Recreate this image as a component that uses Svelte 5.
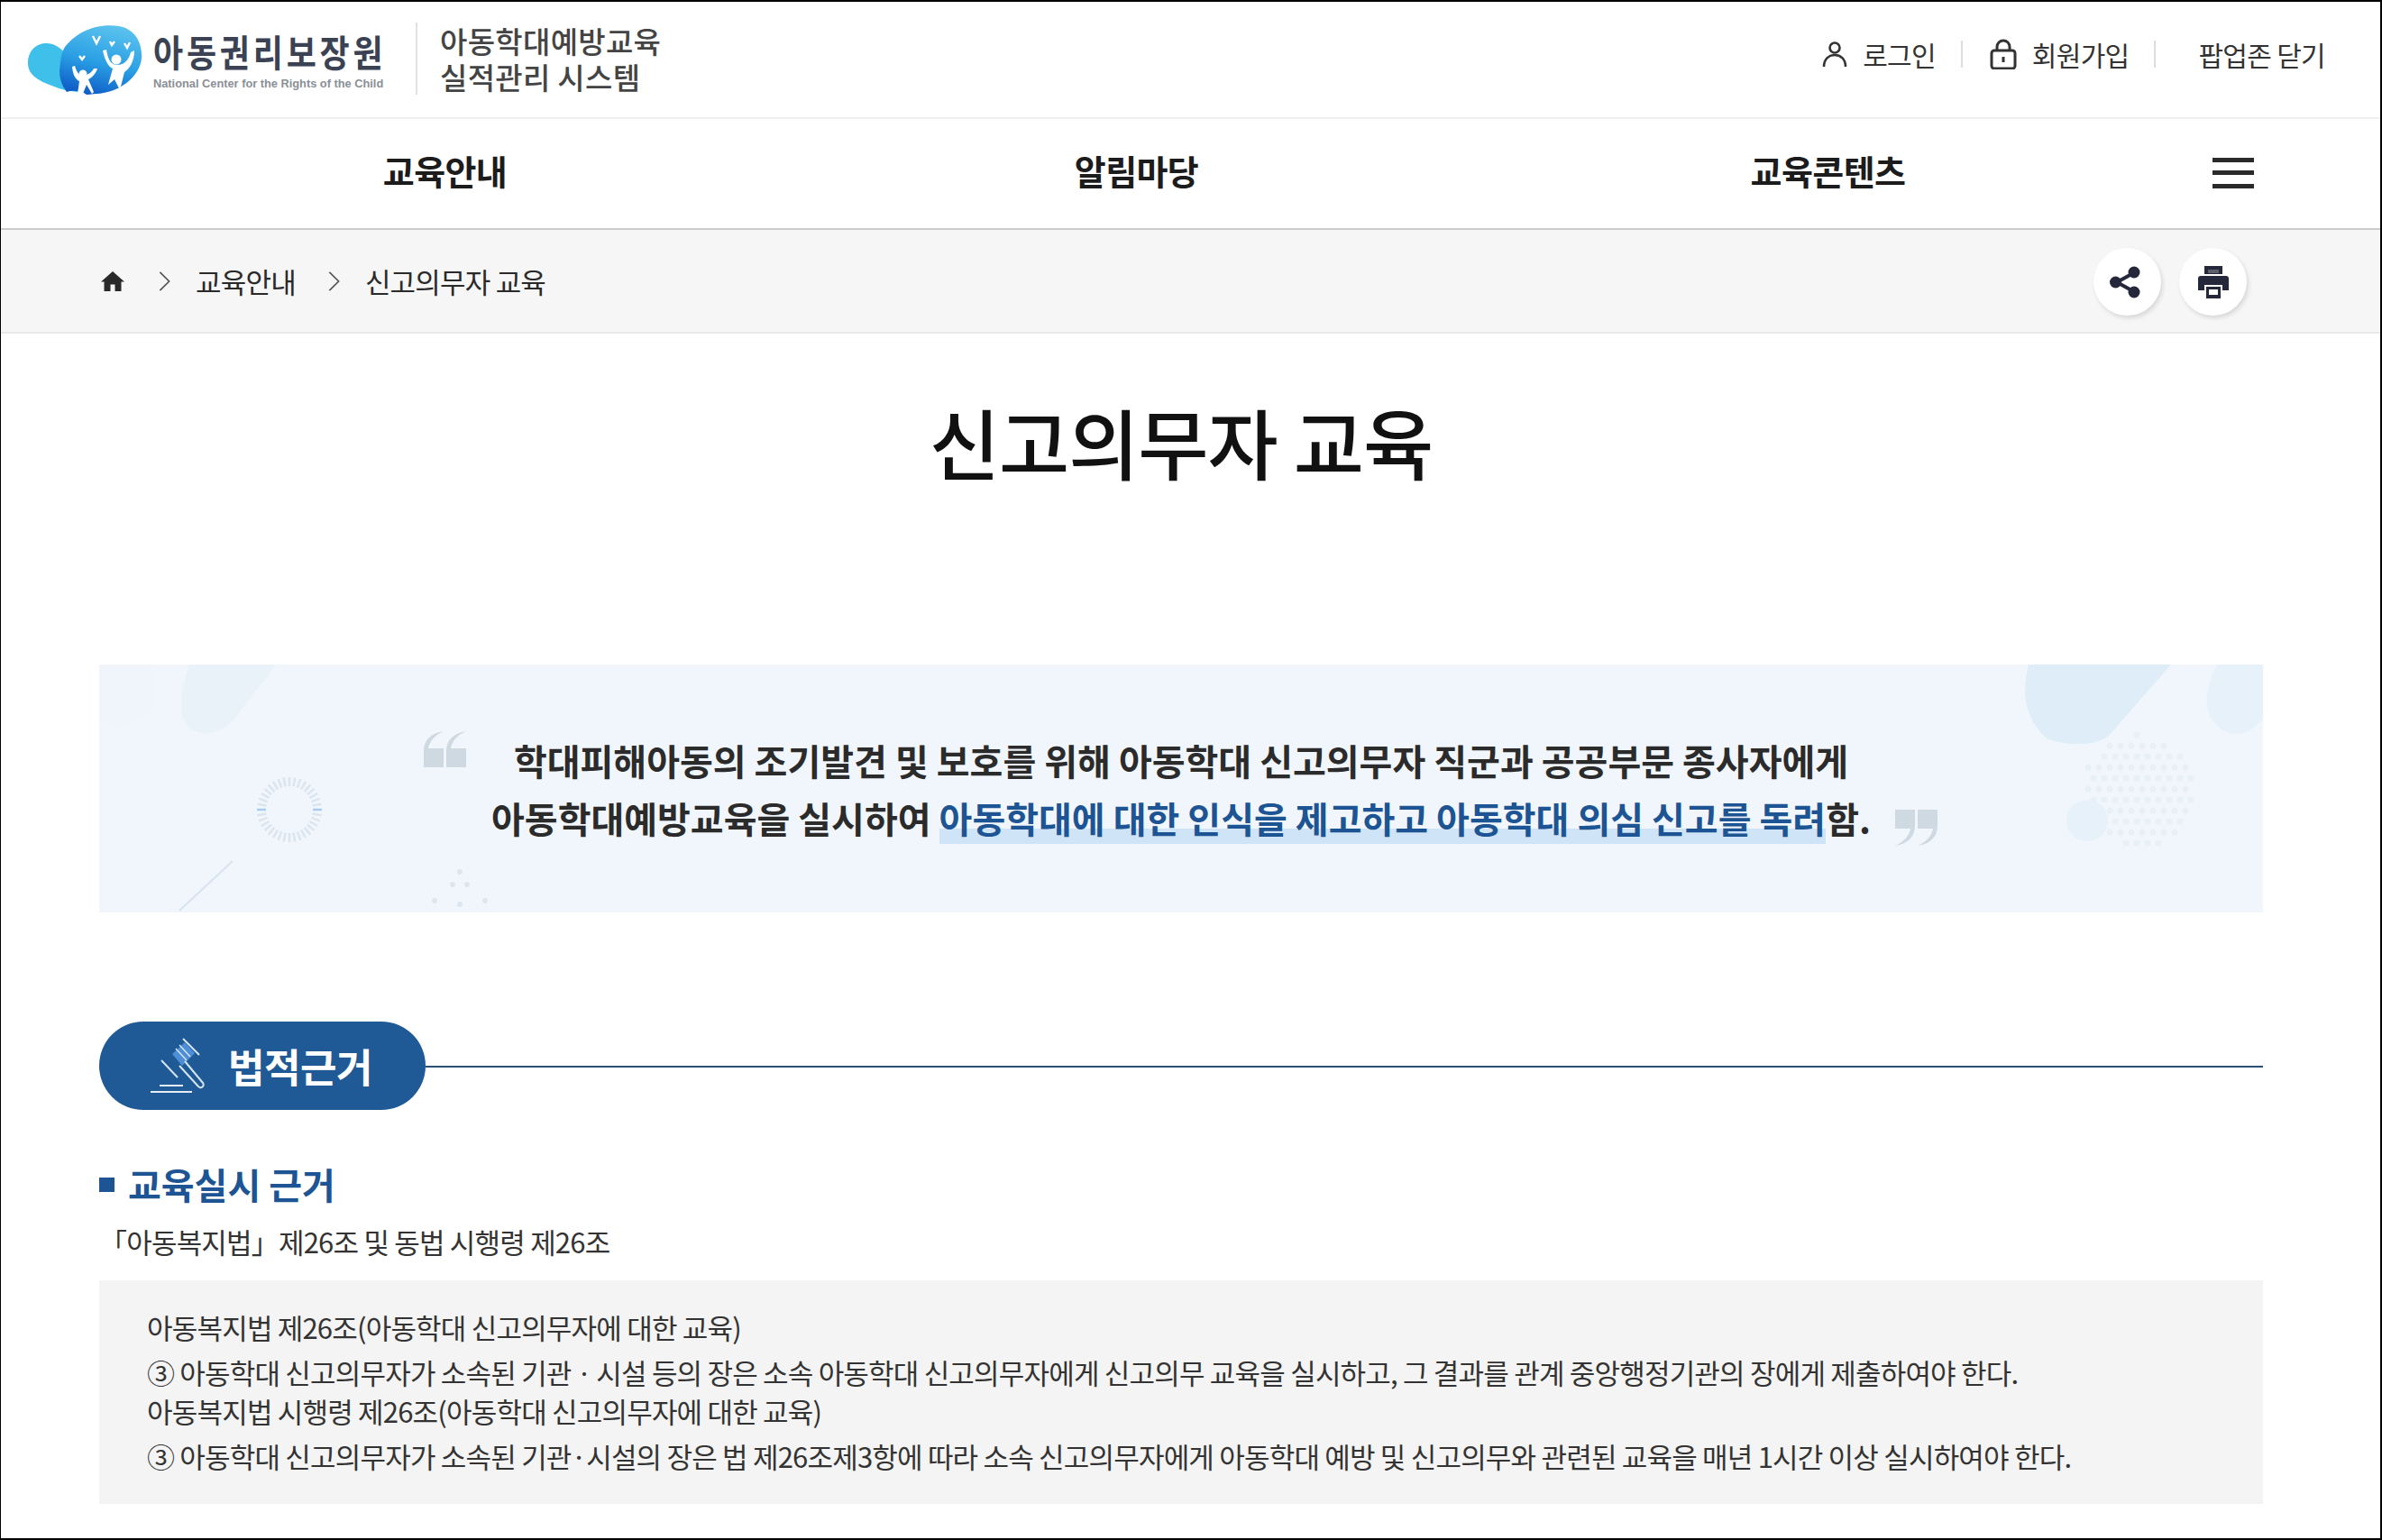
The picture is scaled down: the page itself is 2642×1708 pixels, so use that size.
<script>
  const rays = Array.from({ length: 36 }, (_, i) => i * 10);
  const dots = [];
  for (let r = 0; r < 11; r++) {
    for (let c = 0; c < 11; c++) {
      const x = 2200 + c * 12 + (r % 2) * 6;
      const y = 78 + r * 12;
      const dx = x - 2262, dy = y - 140;
      if (dx * dx + dy * dy < 3900) dots.push([x, y]);
    }
  }
</script>

<div class="frame">
  <header class="top">
    <div class="brand">
      <svg class="logo" viewBox="0 0 128 78" aria-hidden="true">
        <defs>
          <linearGradient id="lg" x1="0.7" y1="0" x2="0.4" y2="1">
            <stop offset="0" stop-color="#5cc3ee" />
            <stop offset="0.55" stop-color="#2a9fe4" />
            <stop offset="1" stop-color="#0f5fc8" />
          </linearGradient>
        </defs>
        <path d="M1 42C1 28 10 20 22 20C36 20 48 36 62 54C66 62 70 70 74 76C60 74 44 74 30 68C14 62 1 56 1 42Z" fill="#3fc0ea" />
        <path d="M42 24C58 4 82 -2 102 1C120 4 128 20 127 36C126 52 112 66 96 72C86 76 76 76 66 77C60 72 50 72 44 74C40 68 36 62 36 50C37 40 38 30 42 24Z" fill="url(#lg)" />
        <circle cx="99" cy="38" r="5.500" fill="#fff" />
        <path d="M84 28C86 38 90 46 95 48L90 66L97 60L103 72L108 52C114 48 119 40 119 28L115 30C113 38 108 44 100 44C94 44 90 40 88 27Z" fill="#fff" />
        <circle cx="62" cy="54" r="4.500" fill="#fff" />
        <path d="M50 46C51 56 54 60 58 62L56 76H62L66 66L72 76L74 74L68 60C72 58 76 54 78 48L74 48C72 52 68 55 62 56C58 56 55 52 53 45Z" fill="#fff" />
        <path d="M73 12l4 8 4-8M92 18l2 4 3-4M108 20l3 5 3-6M58 34l3 4 3-4" stroke="#fff" stroke-width="2.400" fill="none" />
      </svg>
      <div class="org">
        <div class="org-ko">아동권리보장원</div>
        <div class="org-en">National Center for the Rights of the Child</div>
      </div>
      <div class="sys">아동학대예방교육<br />실적관리 시스템</div>
    </div>
    <nav class="tools">
      <a class="tool">
        <svg class="ic-user" viewBox="0 0 28 30" aria-hidden="true"><circle cx="14" cy="8" r="5.500" fill="none" stroke="#333" stroke-width="2.600" /><path d="M2 29C2 20 8 16 14 16S26 20 26 29" fill="none" stroke="#333" stroke-width="2.600" /></svg>
        로그인
      </a>
      <i class="sep"></i>
      <a class="tool">
        <svg class="ic-lock" viewBox="0 0 30 34" aria-hidden="true"><path d="M8 14V9a7 7 0 0 1 14 0v5" fill="none" stroke="#333" stroke-width="3" /><rect x="2" y="13" width="26" height="20" rx="3" fill="none" stroke="#333" stroke-width="3" /><rect x="13.500" y="20" width="3" height="6" fill="#333" /></svg>
        회원가입
      </a>
      <i class="sep"></i>
      <a class="tool close">팝업존 닫기</a>
    </nav>
  </header>

  <nav class="gnb">
    <a>교육안내</a>
    <a>알림마당</a>
    <a>교육콘텐츠</a>
    <button class="burger" aria-label="menu"><span></span><span></span><span></span></button>
  </nav>

  <div class="crumbs">
    <svg class="ic-home" viewBox="0 0 26 22" aria-hidden="true"><path d="M13 0L26 11.500H22.500V22H15.500V14.500H10.500V22H3.500V11.500H0Z" fill="#2a2a2a" /></svg>
    <svg class="chev" viewBox="0 0 14 24" aria-hidden="true"><path d="M1.500 1L12.500 12L1.500 23" fill="none" stroke="#555" stroke-width="1.800" /></svg>
    <span>교육안내</span>
    <svg class="chev" viewBox="0 0 14 24" aria-hidden="true"><path d="M1.500 1L12.500 12L1.500 23" fill="none" stroke="#555" stroke-width="1.800" /></svg>
    <span>신고의무자 교육</span>
    <div class="round-btns">
      <button class="round share" aria-label="share">
        <svg viewBox="0 0 34 36" width="34" height="36" aria-hidden="true"><path d="M26 8L8 18L26 28" stroke="#24283a" stroke-width="4" fill="none" /><circle cx="27" cy="7" r="6.500" fill="#24283a" /><circle cx="6.500" cy="18" r="6.500" fill="#24283a" /><circle cx="27" cy="29" r="6.500" fill="#24283a" /></svg>
      </button>
      <button class="round" aria-label="print">
        <svg viewBox="0 0 34 36" width="34" height="36" aria-hidden="true"><path d="M7 0H27V9H7Z" fill="#24283a" /><path d="M3 11H31A3 3 0 0 1 34 14V27H27V21H7V27H0V14A3 3 0 0 1 3 11Z" fill="#24283a" /><path d="M9 23H25V36H9Z" fill="#24283a" /><rect x="12" y="26" width="10" height="6" fill="#fff" /><rect x="11" y="4" width="12" height="4" fill="#fff" opacity="0.25" /></svg>
      </button>
    </div>
  </div>

  <main class="main">
    <h1>신고의무자 교육</h1>

    <section class="banner">
      <svg class="deco" viewBox="0 0 2400 275" aria-hidden="true">
        <path d="M100 0H196L150 60C135 78 110 82 98 68C88 56 90 30 100 0Z" fill="#e9f1f9" />
        <path d="M0 0H60V50L20 70L0 60Z" fill="#eff5fb" />
        <path d="M148 218L89 273" stroke="#d6e3f0" stroke-width="2" />
        <g transform="translate(211 161)">
          {#each rays as a}
            <line x1="26" y1="0" x2="36" y2="0" stroke={a === 0 || a === 180 ? '#a9cdf0' : '#dbe5ef'} stroke-width="2.500" transform="rotate({a})" />
          {/each}
        </g>
        <g fill="#dde6f0">
          <circle cx="400" cy="230" r="3" /><circle cx="392" cy="244" r="3" /><circle cx="408" cy="244" r="3" /><circle cx="372" cy="262" r="3" /><circle cx="400" cy="266" r="3" /><circle cx="428" cy="262" r="3" />
        </g>
        <path d="M2140 0H2298L2230 78C2215 92 2180 90 2160 82C2135 60 2132 30 2140 0Z" fill="#deedf8" />
        <path d="M2350 0H2400V60C2380 85 2355 82 2340 55C2335 35 2340 15 2350 0Z" fill="#e6f1fa" />
        {#each dots as d}
          <circle cx={d[0]} cy={d[1]} r="3.500" fill="#e7eff7" />
        {/each}
        <circle cx="2205" cy="173" r="23" fill="#e6f1fa" />
      </svg>
      <svg class="q q-open" viewBox="0 0 47 40" aria-hidden="true"><path d="M22 0C12 4 6 12 5 19H22V40H0V22C0 10 8 2 22 0ZM47 0C37 4 31 12 30 19H47V40H25V22C25 10 33 2 47 0Z" fill="#cfd9e2" /></svg>
      <p class="lead">
        학대피해아동의 조기발견 및 보호를 위해 아동학대 신고의무자 직군과 공공부문 종사자에게<br />
        아동학대예방교육을 실시하여 <span class="hl">아동학대에 대한 인식을 제고하고 아동학대 의심 신고를 독려</span>함.
      </p>
      <svg class="q q-close" viewBox="0 0 47 40" aria-hidden="true"><path d="M25 40C35 36 41 28 42 21H25V0H47V18C47 30 39 38 25 40ZM0 40C10 36 16 28 17 21H0V0H22V18C22 30 14 38 0 40Z" fill="#cfd9e2" /></svg>
    </section>

    <div class="sec-row">
      <h2 class="pill">
        <svg class="gavel" viewBox="0 0 62 62" aria-hidden="true">
          <path d="M24 18L38 5L49 17L35 31Z" fill="#4d8fd6" />
          <path d="M38 26L58 50A3 3 0 0 1 53 54L32 31" fill="none" stroke="#d5e4f2" stroke-width="2" />
          <path d="M36 1L54 19M12 25L30 44" stroke="#d5e4f2" stroke-width="2" />
          <path d="M32 8L44 21M28 12L40 25" stroke="#d5e4f2" stroke-width="1.500" />
          <path d="M0 60H46M10 53H36" stroke="#e4edf6" stroke-width="2" />
        </svg>
        법적근거
      </h2>
      <div class="rule"></div>
    </div>

    <h3 class="sub">교육실시 근거</h3>
    <p class="law">「아동복지법」제26조 및 동법 시행령 제26조</p>

    <div class="box">
      <p class="l1">아동복지법 제26조(아동학대 신고의무자에 대한 교육)</p>
      <p class="l2">③ 아동학대 신고의무자가 소속된 기관ㆍ시설 등의 장은 소속 아동학대 신고의무자에게 신고의무 교육을 실시하고, 그 결과를 관계 중앙행정기관의 장에게 제출하여야 한다.</p>
      <p class="l3">아동복지법 시행령 제26조(아동학대 신고의무자에 대한 교육)</p>
      <p class="l4">③ 아동학대 신고의무자가 소속된 기관·시설의 장은 법 제26조제3항에 따라 소속 신고의무자에게 아동학대 예방 및 신고의무와 관련된 교육을 매년 1시간 이상 실시하여야 한다.</p>
    </div>
  </main>
</div>

<style>
  :global(body) {
    margin: 0;
    background: #fff;
  }
  .frame {
    width: 2642px;
    height: 1708px;
    box-sizing: border-box;
    border-style: solid;
    border-color: #000;
    border-width: 2px 2px 2px 1px;
    overflow: hidden;
    font-family: "Noto Sans CJK KR", "Noto Sans", sans-serif;
    color: #222;
  }
  .top {
    height: 128px;
    border-bottom: 2px solid #f0f0f0;
    display: flex;
    align-items: center;
    justify-content: space-between;
    padding: 0 61px 0 29px;
  }
  .brand {
    display: flex;
    align-items: center;
  }
  .logo {
    width: 128px;
    height: 78px;
    margin-top: 1px;
  }
  .org {
    margin-left: 12px;
    width: 259px;
  }
  .org-ko {
    font-size: 36px;
    font-weight: 700;
    line-height: 48px;
    letter-spacing: 3.800px;
    color: #3a4253;
    white-space: nowrap;
    transform: scaleY(1.15);
    transform-origin: center;
  }
  .org-en {
    font-family: "Liberation Sans", sans-serif;
    font-size: 12.800px;
    font-weight: 700;
    line-height: 14px;
    margin-top: 6px;
    color: #8a8f97;
    white-space: nowrap;
  }
  .sys {
    margin-left: 32px;
    margin-top: -3px;
    padding-left: 25px;
    border-left: 2px solid #e2e2e2;
    font-size: 33px;
    font-weight: 500;
    line-height: 40px;
    letter-spacing: 0.3px;
    color: #444;
  }
  .tools {
    display: flex;
    align-items: center;
    margin-bottom: 12px;
    font-size: 30px;
    letter-spacing: -0.7px;
    color: #333;
  }
  .tool {
    display: flex;
    align-items: center;
    gap: 17px;
  }
  .ic-user {
    width: 28px;
    height: 30px;
  }
  .ic-lock {
    width: 30px;
    height: 34px;
  }
  .sep {
    width: 2px;
    height: 30px;
    background: #ddd;
    margin: 0 30px 0 28px;
  }
  .close {
    margin-left: 17px;
  }
  .gnb {
    height: 121px;
    border-bottom: 2px solid #ccc;
    display: grid;
    grid-template-columns: repeat(3, 767px) 1fr;
    align-items: center;
    padding-left: 109px;
    font-size: 38px;
    font-weight: 700;
    letter-spacing: -0.6px;
    color: #1c1c1c;
    text-align: center;
  }
  .gnb a {
    margin-top: -8px;
  }
  .burger {
    border: 0;
    background: none;
    padding: 0;
    margin: -2px 0 0 43px;
    width: 46px;
    height: 34px;
    display: flex;
    flex-direction: column;
    justify-content: space-between;
  }
  .burger span {
    display: block;
    height: 5px;
    background: #2a2a2a;
  }
  .crumbs {
    height: 115px;
    box-sizing: border-box;
    background: #f6f6f6;
    border-bottom: 2px solid #e8e8e8;
    display: flex;
    align-items: center;
    padding: 0 148px 0 111px;
    font-size: 31px;
    letter-spacing: -0.8px;
    color: #2a2a2a;
  }
  .ic-home {
    width: 26px;
    height: 22px;
    margin-right: 38px;
  }
  .chev {
    width: 13px;
    height: 24px;
    margin-right: 28px;
  }
  .crumbs span {
    margin-right: 36px;
  }
  .round-btns {
    margin: 2px 0 0 auto;
    display: flex;
    gap: 20px;
  }
  .round {
    width: 75px;
    height: 75px;
    border: 0;
    padding: 0;
    border-radius: 50%;
    background: #fff;
    box-shadow: 2px 3px 5px rgba(0, 0, 0, 0.12);
    display: flex;
    align-items: center;
    justify-content: center;
  }
  .share svg {
    margin-left: -6px;
  }
  .main {
    padding: 0 130px 0 109px;
  }
  h1 {
    margin: 64px 0 0;
    font-size: 85px;
    font-weight: 500;
    line-height: 110px;
    letter-spacing: -1px;
    text-align: center;
    color: #111;
  }
  .banner {
    position: relative;
    margin-top: 193px;
    height: 275px;
    background: #f1f6fc;
    overflow: hidden;
    display: flex;
    align-items: center;
    justify-content: center;
  }
  .deco {
    position: absolute;
    inset: 0;
    width: 100%;
    height: 100%;
  }
  .q {
    position: absolute;
    width: 47px;
    height: 40px;
  }
  .q-open {
    left: 360px;
    top: 74px;
  }
  .q-close {
    left: 1992px;
    top: 161px;
  }
  .lead {
    position: relative;
    margin: 0;
    font-size: 40px;
    font-weight: 700;
    line-height: 64px;
    letter-spacing: 0;
    text-align: center;
    color: #2b2b2b;
  }
  .hl {
    color: #1d5493;
    background: linear-gradient(to bottom, transparent calc(100% - 17px), #cfe4f6 calc(100% - 17px));
  }
  .sec-row {
    margin-top: 121px;
    display: flex;
    align-items: center;
  }
  .pill {
    margin: 0;
    flex: none;
    width: 362px;
    height: 98px;
    box-sizing: border-box;
    border-radius: 49px;
    background: #1f5a96;
    color: #fff;
    display: flex;
    align-items: center;
    padding-left: 57px;
    gap: 24px;
    font-size: 44px;
    font-weight: 700;
    letter-spacing: -0.5px;
  }
  .gavel {
    width: 62px;
    height: 62px;
    flex: none;
  }
  .rule {
    flex: 1;
    height: 2px;
    margin-top: 1px;
    background: #2a5078;
  }
  .sub {
    position: relative;
    margin: 54px 0 0;
    padding-left: 32px;
    font-size: 40px;
    font-weight: 700;
    line-height: 56px;
    letter-spacing: 0;
    color: #1d5493;
  }
  .sub::before {
    content: "";
    position: absolute;
    left: 0;
    top: 21px;
    width: 17px;
    height: 16px;
    background: #1d5493;
  }
  .law {
    margin: 13px 0 0;
    font-size: 31px;
    line-height: 46px;
    letter-spacing: -0.8px;
    color: #333;
  }
  .box {
    margin-top: 20px;
    height: 248px;
    box-sizing: border-box;
    background: #f4f4f4;
    padding: 30px 0 0 53px;
    font-size: 31px;
    letter-spacing: -0.8px;
    color: #333;
  }
  .box p {
    margin: 0;
    line-height: 44px;
    white-space: nowrap;
  }
  .l2, .l4 {
    margin-top: 6px !important;
  }
  .l3 {
    margin-top: -1px !important;
  }
</style>
